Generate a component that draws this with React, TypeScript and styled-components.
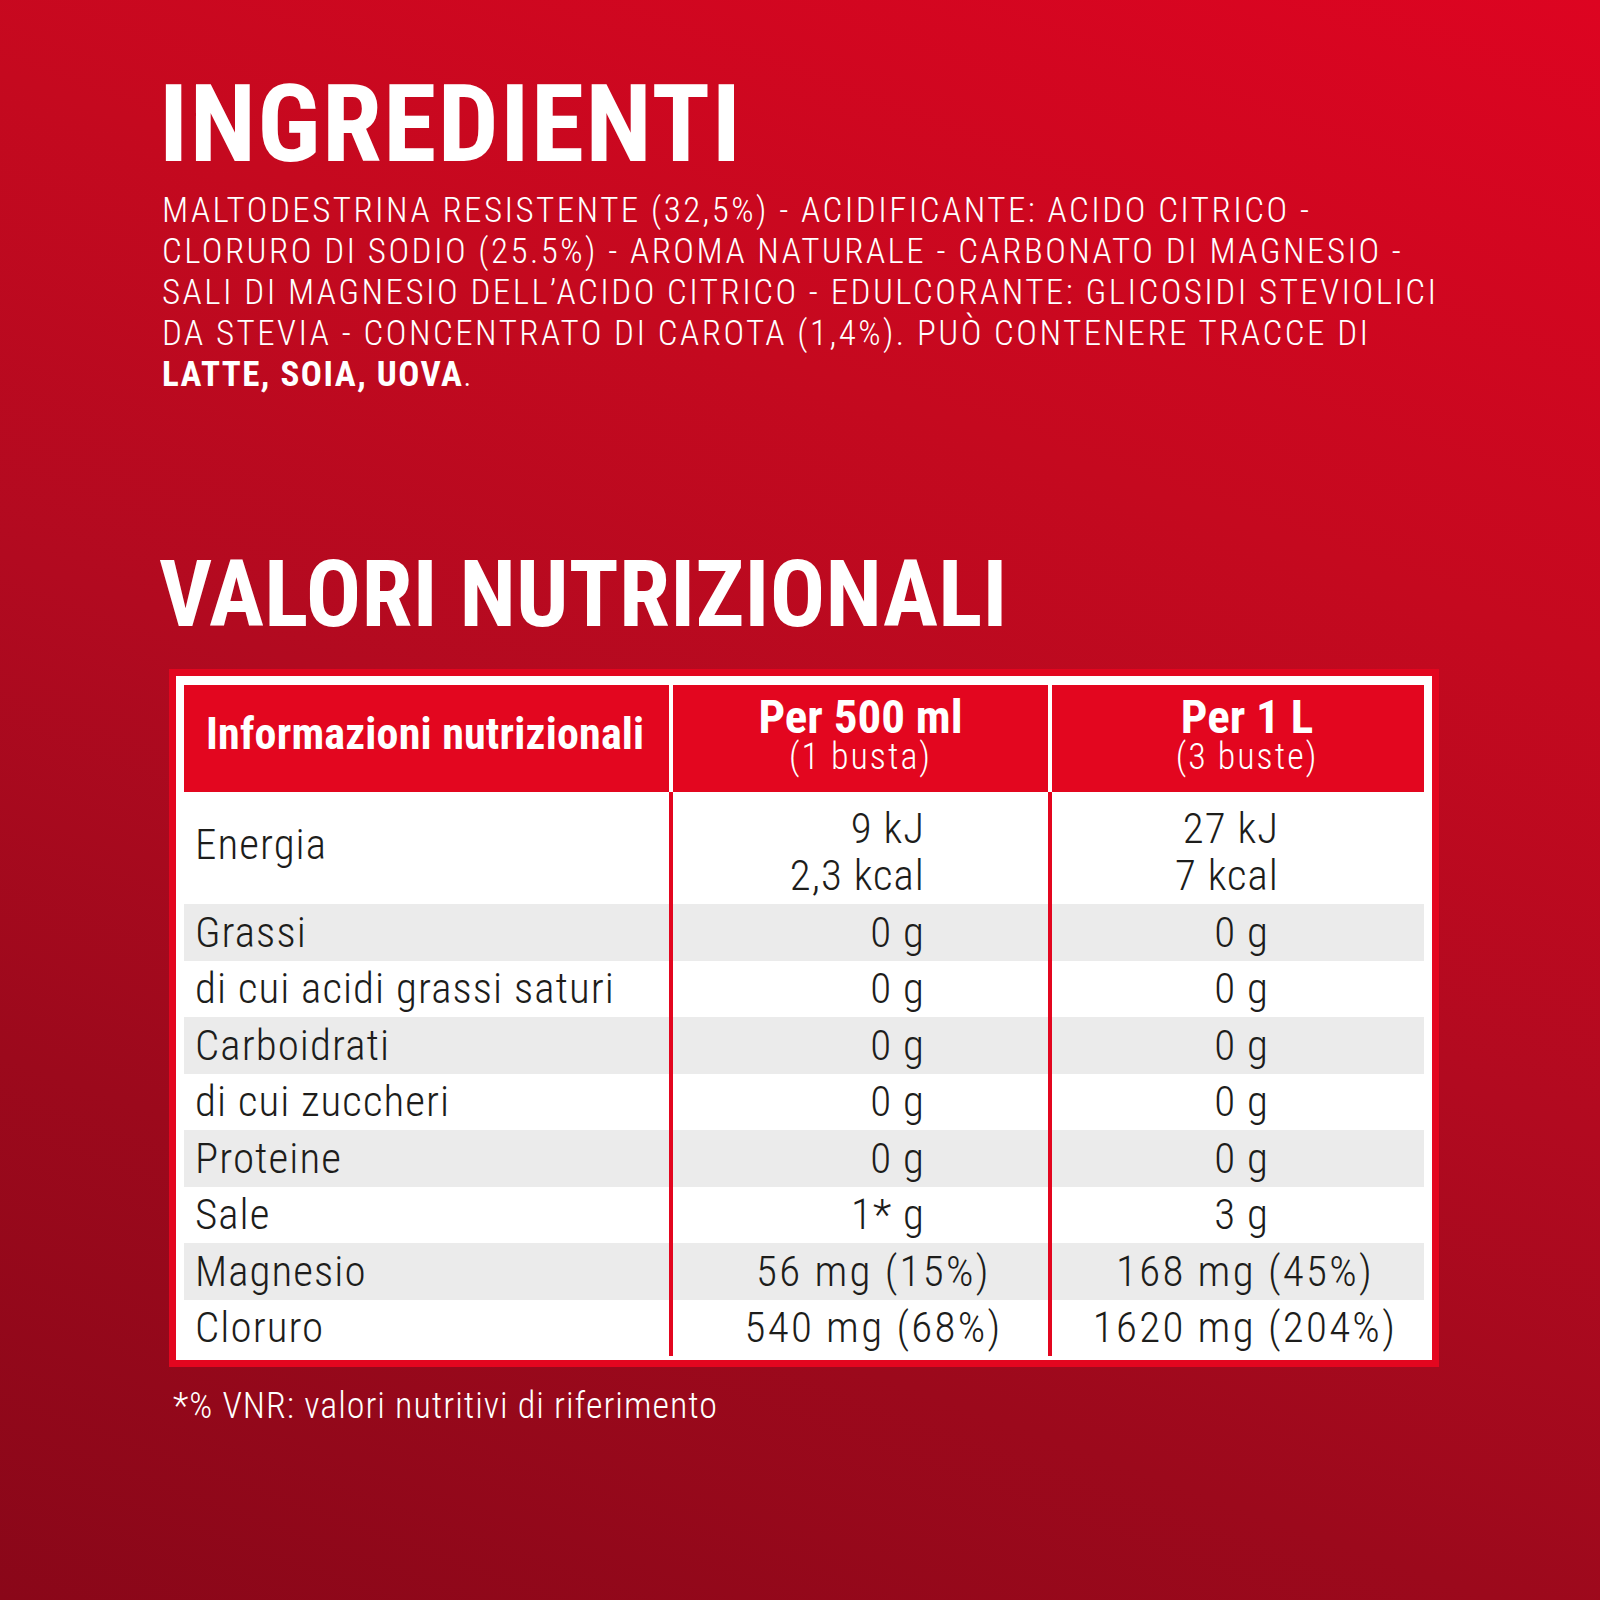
import styled, { createGlobalStyle } from "styled-components";

const GlobalStyle = createGlobalStyle`
  html, body {
    margin: 0;
    padding: 0;
  }
  body {
    font-family: "Roboto", "Liberation Sans", sans-serif;
    font-stretch: 75%;
    font-weight: 300;
  }
`;

const Page = styled.div`
  width: 1600px;
  height: 1600px;
  box-sizing: border-box;
  padding: 70px 0 0 156px;
  background: linear-gradient(200deg, #dd0421 0%, #c5091f 30%, #b20a20 52%, #9c091c 75%, #8a0719 100%);
  color: #fff;
`;

const Title = styled.h1<{ $size: number; $track: number }>`
  margin: 0;
  padding-left: 3px;
  font-size: ${(p) => p.$size}px;
  line-height: 1;
  font-weight: 700;
  letter-spacing: ${(p) => p.$track}px;
`;

const Ingredients = styled.p`
  margin: 12px 0 154px 6px;
  font-size: 35px;
  line-height: 41px;
  letter-spacing: 2.45px;
  white-space: nowrap;

  b {
    font-weight: 700;
    letter-spacing: 1.5px;
  }
`;

const Table = styled.div`
  width: 1270px;
  box-sizing: border-box;
  margin: 28px 0 0 13px;
  border: 7px solid #e3061f;
  padding: 9px 8px 4px 8px;
  background: #fff;
`;

const HeadRow = styled.div`
  display: grid;
  grid-template-columns: 485px 375px 1fr;
  column-gap: 4px;
`;

const HeadCell = styled.div<{ $left?: boolean; $shift?: number }>`
  height: 107px;
  box-sizing: border-box;
  background: #e3061f;
  display: flex;
  flex-direction: column;
  justify-content: center;
  align-items: ${(p) => (p.$left ? "flex-start" : "center")};
  padding: ${(p) => (p.$left ? "0 0 10px 22px" : `0 0 6px ${p.$shift ?? 0}px`)};
  color: #fff;
  white-space: nowrap;
`;

const HeadTitle = styled.div<{ $size: number; $track: number }>`
  font-size: ${(p) => p.$size}px;
  font-weight: 700;
  line-height: 42px;
  letter-spacing: ${(p) => p.$track}px;
`;

const HeadSub = styled.div`
  font-size: 36px;
  line-height: 38px;
  letter-spacing: 2px;
`;

const Row = styled.div<{ $tall?: boolean }>`
  display: grid;
  grid-template-columns: 485px 375px 1fr;
  column-gap: 4px;
  height: ${(p) => (p.$tall ? "112px" : "56.5px")};
  background: #e3061f;
`;

const Cell = styled.div<{
  $shade?: boolean;
  $align?: string;
  $pad?: number;
  $wide?: boolean;
  $top?: number;
  $bottom?: number;
}>`
  background: ${(p) => (p.$shade ? "#ebebeb" : "#fff")};
  display: flex;
  flex-direction: column;
  justify-content: center;
  align-items: ${(p) => p.$align ?? "flex-start"};
  padding: ${(p) =>
    p.$align === "flex-end"
      ? `${p.$top ?? 0}px ${p.$pad ?? 0}px 0 0`
      : `0 0 ${p.$bottom ?? 0}px ${p.$pad ?? 0}px`};
  font-size: 43px;
  line-height: 47px;
  letter-spacing: ${(p) => (p.$wide ? "2.3px" : "1.05px")};
  color: #1d1d1b;
  white-space: nowrap;
`;

const Footnote = styled.div`
  margin: 18px 0 0 17px;
  font-size: 36px;
  line-height: 43px;
  letter-spacing: 1px;
`;

type Nutrient = {
  label: string;
  a: string;
  b: string;
  centered?: boolean;
};

const rows: Nutrient[] = [
  { label: "Grassi", a: "0 g", b: "0 g" },
  { label: "di cui acidi grassi saturi", a: "0 g", b: "0 g" },
  { label: "Carboidrati", a: "0 g", b: "0 g" },
  { label: "di cui zuccheri", a: "0 g", b: "0 g" },
  { label: "Proteine", a: "0 g", b: "0 g" },
  { label: "Sale", a: "1* g", b: "3 g" },
  { label: "Magnesio", a: "56 mg (15%)", b: "168 mg (45%)", centered: true },
  { label: "Cloruro", a: "540 mg (68%)", b: "1620 mg (204%)", centered: true },
];

function NutrientRow({ item, shade }: { item: Nutrient; shade: boolean }) {
  return (
    <Row>
      <Cell $shade={shade} $pad={11}>
        {item.label}
      </Cell>
      {item.centered ? (
        <>
          <Cell $shade={shade} $align="center" $pad={26} $wide>
            {item.a}
          </Cell>
          <Cell $shade={shade} $align="center" $pad={14} $wide>
            {item.b}
          </Cell>
        </>
      ) : (
        <>
          <Cell $shade={shade} $align="flex-end" $pad={123}>
            {item.a}
          </Cell>
          <Cell $shade={shade} $align="flex-end" $pad={155}>
            {item.b}
          </Cell>
        </>
      )}
    </Row>
  );
}

export default function App() {
  return (
    <>
      <GlobalStyle />
      <Page>
        <Title $size={108} $track={1.5}>
          INGREDIENTI
        </Title>
        <Ingredients>
          MALTODESTRINA RESISTENTE (32,5%) - ACIDIFICANTE: ACIDO CITRICO -
          <br />
          CLORURO DI SODIO (25.5%) - AROMA NATURALE - CARBONATO DI MAGNESIO -
          <br />
          SALI DI MAGNESIO DELL’ACIDO CITRICO - EDULCORANTE: GLICOSIDI STEVIOLICI
          <br />
          DA STEVIA - CONCENTRATO DI CAROTA (1,4%). PUÒ CONTENERE TRACCE DI
          <br />
          <b>LATTE, SOIA, UOVA</b>.
        </Ingredients>

        <Title $size={92} $track={0.3}>
          VALORI NUTRIZIONALI
        </Title>

        <Table>
          <HeadRow>
            <HeadCell $left>
              <HeadTitle $size={44} $track={0.2}>
                Informazioni nutrizionali
              </HeadTitle>
            </HeadCell>
            <HeadCell>
              <HeadTitle $size={47} $track={0}>
                Per 500 ml
              </HeadTitle>
              <HeadSub>(1 busta)</HeadSub>
            </HeadCell>
            <HeadCell $shift={18}>
              <HeadTitle $size={47} $track={0}>
                Per 1 L
              </HeadTitle>
              <HeadSub>(3 buste)</HeadSub>
            </HeadCell>
          </HeadRow>

          <Row $tall>
            <Cell $pad={11} $bottom={8}>
              Energia
            </Cell>
            <Cell $align="flex-end" $pad={123} $top={8}>
              <span>9 kJ</span>
              <span>2,3 kcal</span>
            </Cell>
            <Cell $align="flex-end" $pad={145} $top={8}>
              <span>27 kJ</span>
              <span>7 kcal</span>
            </Cell>
          </Row>
          {rows.map((item, i) => (
            <NutrientRow key={item.label} item={item} shade={i % 2 === 0} />
          ))}
        </Table>

        <Footnote>*% VNR: valori nutritivi di riferimento</Footnote>
      </Page>
    </>
  );
}
